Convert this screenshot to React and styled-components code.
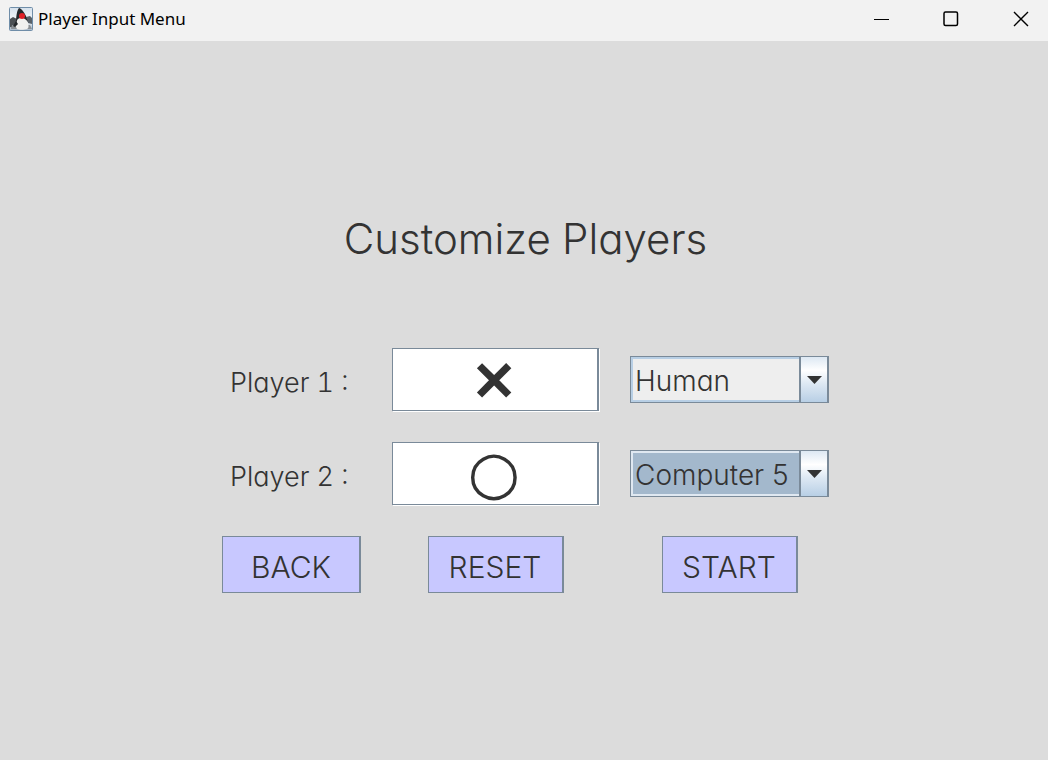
import React, { useState } from "react";
import styled, { createGlobalStyle } from "styled-components";

const GlobalStyle = createGlobalStyle`
  *, *::before, *::after { box-sizing: border-box; }
  body { margin: 0; background: #dcdcdc; }
`;

const gothic = `"Century Gothic", Inter, sans-serif`;

const Window = styled.div`
  min-height: 100vh;
  display: flex;
  flex-direction: column;
  background: #dcdcdc;
  color: #333;
  font-family: ${gothic};
  font-weight: 300;
  font-feature-settings: "cv11", "tnum";
`;

const TitleBar = styled.header`
  display: flex;
  align-items: center;
  height: 41px;
  padding: 0 0 4px 9px;
  background: #f2f2f2;
  color: #000;
`;

const WindowTitle = styled.span`
  flex: 1;
  margin-left: 5px;
  font: 400 17px/24px "Noto Sans", sans-serif;
`;

const WindowButton = styled.button`
  display: flex;
  align-items: center;
  justify-content: center;
  width: 70px;
  height: 37px;
  padding: 0;
  border: 0;
  background: transparent;
  &:last-child { width: 62px; padding-left: 8px; }
`;

const Main = styled.main`
  flex: 1;
  display: flex;
  flex-direction: column;
  align-items: center;
  justify-content: center;
  padding: 0 20px 0 23px;
`;

const Heading = styled.h1`
  margin: 0 0 78px;
  font-size: 42px;
  line-height: 62px;
  font-weight: 300;
`;

const Form = styled.form`
  display: grid;
  grid-template-columns: 139px 207px 199px;
  column-gap: 31px;
  row-gap: 31px;
  align-items: center;
  justify-items: center;
`;

const PlayerLabel = styled.label`
  justify-self: start;
  padding: 6px 0 0 8px;
  font-size: 27px;
  line-height: 36px;
  white-space: nowrap;
`;

const SymbolInput = styled.input`
  width: 100%;
  height: 63px;
  padding: ${(p) => (p.$bold ? "4px 2px 0 0" : "0 2px 4px 0")};
  border: 1px solid #7a8a99;
  border-right-width: 2px;
  border-radius: 0;
  box-shadow: 1px 1px 0 #fff;
  background: #fff;
  color: #333;
  font-family: "DejaVu Sans", sans-serif;
  font-size: ${(p) => p.$size}px;
  line-height: 60px;
  -webkit-text-stroke: ${(p) => (p.$bold ? "2px #333" : "0")};
  text-align: center;
  outline: none;
`;

const SelectFrame = styled.div`
  display: flex;
  position: relative;
  width: 100%;
  height: 47px;
  border: 1px solid #7a8a99;
  border-right-width: 2px;
`;

const KindSelect = styled.select`
  appearance: none;
  flex: 1;
  min-width: 0;
  height: 100%;
  padding: 2px 28px 0 2px;
  border: 2px solid ${(p) => (p.$active ? "#dfe8f1" : "#b8cfe5")};
  border-right: 0;
  border-radius: 0;
  background: ${(p) => (p.$active ? "#a3b8cc" : "#eee")};
  color: #333;
  font: 300 28px/36px ${gothic};
  font-feature-settings: "cv11";
  outline: none;
`;

const Arrow = styled.span`
  position: absolute;
  inset: 0 0 0 auto;
  display: flex;
  align-items: center;
  justify-content: center;
  width: 28px;
  border-left: 2px solid #7a8a99;
  background: linear-gradient(#dde8f3, #fff 30%, #dde8f3 60%, #b8cfe5);
  pointer-events: none;
`;

const ActionButton = styled.button`
  width: ${(p) => p.$width}px;
  height: 57px;
  padding: 5px 0 0;
  border: 1px solid #7a8a99;
  border-right-width: 2px;
  border-radius: 0;
  background: #c8c8ff;
  color: #333;
  font: 300 30px/44px ${gothic};
`;

function JavaIcon() {
  return (
    <svg width="24" height="24" viewBox="0 0 24 24" aria-hidden="true">
      <defs>
        <linearGradient id="tile" x1="0" y1="0" x2="0" y2="1">
          <stop offset="0" stopColor="#d5e1ec" />
          <stop offset="0.55" stopColor="#f4f7fa" />
          <stop offset="1" stopColor="#a8b8c8" />
        </linearGradient>
      </defs>
      <rect x="0.5" y="0.5" width="23" height="23" rx="1" fill="url(#tile)" stroke="#6f8da8" />
      <path d="M1 12l3-2 4 2 1 5-4 4-4-1z" fill="#4b5054" />
      <path d="M17 10l4-1 2 2v6l-4-1z" fill="#596168" />
      <path d="M3 18h18l2 4H2z" fill="#8b9094" />
      <path d="M10 1c2 0 5 4 7 8l2 6-5-4-5 1-2 4c0-7 1-13 3-15z" fill="#24282b" />
      <path d="M9 12c3-2 7-1 9 2 2 4 2 7 0 8-3 1-8 1-10 0-2-2-1-7 1-10z" fill="#f1f1ef" />
      <path d="M7 14l-3 5 2 1 3-3z" fill="#24282b" />
      <circle cx="13" cy="9" r="3" fill="#df2028" />
    </svg>
  );
}

function Player({ id, number, symbol, size, bold, initial, active }) {
  const [kind, setKind] = useState(initial);
  return (
    <>
      <PlayerLabel htmlFor={id}>Player {number} :</PlayerLabel>
      <SymbolInput id={id} defaultValue={symbol} $size={size} $bold={bold} />
      <SelectFrame>
        <KindSelect
          aria-label={`Player ${number} type`}
          value={kind}
          onChange={(e) => setKind(e.target.value)}
          $active={active}
        >
          <option>Human</option>
          <option>Computer 5</option>
        </KindSelect>
        <Arrow>
          <svg width="15" height="8" viewBox="0 0 15 8" aria-hidden="true">
            <path d="M0 0h15L7.500 8z" fill="#333" />
          </svg>
        </Arrow>
      </SelectFrame>
    </>
  );
}

export default function App() {
  return (
    <Window>
      <GlobalStyle />
      <TitleBar>
        <JavaIcon />
        <WindowTitle>Player Input Menu</WindowTitle>
        <WindowButton aria-label="Minimize">
          <svg width="16" height="16" viewBox="0 0 16 16">
            <path d="M1 8.500h15" stroke="#000" />
          </svg>
        </WindowButton>
        <WindowButton aria-label="Maximize">
          <svg width="16" height="16" viewBox="0 0 16 16" fill="none">
            <rect x="1" y="1" width="13.500" height="13.500" rx="1.500" stroke="#000" strokeWidth="1.500" />
          </svg>
        </WindowButton>
        <WindowButton aria-label="Close">
          <svg width="16" height="16" viewBox="0 0 16 16">
            <path d="M1 1l14 14M15 1L1 15" stroke="#000" strokeWidth="1.400" />
          </svg>
        </WindowButton>
      </TitleBar>
      <Main>
        <Heading>Customize Players</Heading>
        <Form onSubmit={(e) => e.preventDefault()}>
          <Player id="player-1" number={1} symbol="✕" size={54} bold initial="Human" />
          <Player id="player-2" number={2} symbol="○" size={60} initial="Computer 5" active />
          <ActionButton type="button" $width={139}>BACK</ActionButton>
          <ActionButton type="reset" $width={136}>RESET</ActionButton>
          <ActionButton type="submit" $width={136}>START</ActionButton>
        </Form>
      </Main>
    </Window>
  );
}
